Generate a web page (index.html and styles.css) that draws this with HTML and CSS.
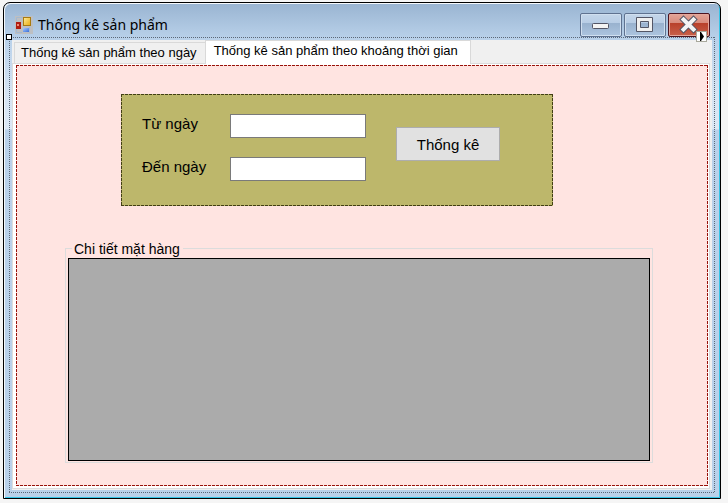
FILE: index.html
```html
<!DOCTYPE html>
<html lang="vi">
<head>
<meta charset="utf-8">
<title>Thống kê sản phẩm</title>
<link rel="stylesheet" href="styles.css">
</head>
<body>
<main class="window">
  <header class="titlebar">
    <svg class="app-icon" width="18" height="18" viewBox="0 0 18 18" aria-hidden="true">
      <defs>
        <linearGradient id="gold" x1="0" y1="0" x2="1" y2="1"><stop offset="0" stop-color="#ffec9a"/><stop offset="1" stop-color="#e8ab10"/></linearGradient>
        <linearGradient id="blue" x1="0" y1="0" x2="1" y2="1"><stop offset="0" stop-color="#a4c8ff"/><stop offset="1" stop-color="#3a6fd8"/></linearGradient>
      </defs>
      <rect width="18" height="18" fill="#bdbfc2"/>
      <path d="M1.500 5V1.500H8M1.500 13v3.500H7M14.500 11v5.500H14" fill="none" stroke="#a3b9d2"/>
      <rect x="8.500" y="1.500" width="7" height="8" fill="url(#gold)" stroke="#a87a10"/>
      <rect x="1" y="6" width="5" height="7" fill="#b01c10"/>
      <rect x="2" y="8" width="2" height="2" fill="#f08a78"/>
      <rect x="8" y="12" width="6" height="4" fill="url(#blue)"/>
    </svg>
    <h1 class="title">Thống kê sản phẩm</h1>
    <div class="caption-buttons">
      <button class="caption" type="button" aria-label="Minimize">
        <svg width="40" height="22" viewBox="0 0 40 22"><rect x="11.500" y="9.500" width="16" height="5" rx="1" fill="#f4f4f4" stroke="#535666"/></svg>
      </button>
      <button class="caption" type="button" aria-label="Maximize">
        <svg width="40" height="22" viewBox="0 0 40 22"><path fill-rule="evenodd" d="M11.500 3.500h16v14h-16zM15.500 7.500h8v6h-8z" fill="#f0f0f0" stroke="#535666"/></svg>
      </button>
      <button class="caption close" type="button" aria-label="Close">
        <svg width="40" height="22" viewBox="0 0 40 22" fill="none" stroke-linecap="square">
          <path d="M14.500 5.500L24.500 15.500M24.500 5.500L14.500 15.500" stroke="#535666" stroke-width="6"/>
          <path d="M14.500 5.500L24.500 15.500M24.500 5.500L14.500 15.500" stroke="#f4f4f4" stroke-width="4"/>
        </svg>
      </button>
    </div>
  </header>

  <div class="selection">
    <span class="handle"></span>
    <button class="smart-tag" type="button" aria-label="Tasks">
      <svg width="9" height="9" viewBox="0 0 9 9"><path d="M3 0h1l3 4.500L4 9H3z" fill="#000"/></svg>
    </button>
    <div class="client">
      <div class="tabs" role="tablist">
        <button class="tab" type="button" role="tab" aria-selected="false">Thống kê sản phẩm theo ngày</button>
        <button class="tab active" type="button" role="tab" aria-selected="true">Thống kê sản phẩm theo khoảng thời gian</button>
      </div>
      <section class="page" role="tabpanel">
        <div class="page-body dashed">
          <form class="filter dashed">
            <div class="fields">
              <label for="from">Từ ngày</label>
              <input id="from" type="text">
              <label for="to">Đến ngày</label>
              <input id="to" type="text">
            </div>
            <button class="submit" type="button">Thống kê</button>
          </form>
          <fieldset class="details">
            <legend>Chi tiết mặt hàng</legend>
            <div class="grid-view"></div>
          </fieldset>
        </div>
      </section>
    </div>
  </div>
</main>
</body>
</html>
```
FILE: styles.css
```css
* {
  box-sizing: border-box;
}

body {
  margin: 0;
  min-height: 100vh;
  padding: 2px 7px 4px 3px;
  display: flex;
  background: #f5f5f5;
  color: #000;
  font-family: "Liberation Sans", Arial, sans-serif;
  font-size: 13px;
}

button,
input {
  margin: 0;
  font: inherit;
  color: inherit;
}

.window {
  flex: 1;
  display: flex;
  flex-direction: column;
  padding: 0 5px 5px;
  border: 1px solid #000;
  border-radius: 7px 7px 0 0;
  background: linear-gradient(#99b4d1, #b9d1ea 36px, #d5e4f3 90px, #dce8f5 126px, #b9d1ea 127px);
  box-shadow: inset 1px 1px #f4f8fc, inset -1px -1px #35c4e6;
}

.titlebar {
  display: flex;
  align-items: flex-start;
  height: 34px;
  padding: 10px 5px 0 6px;
}

.app-icon {
  margin-top: 3px;
}

.title {
  flex: 1;
  margin: 2px 0 0 5px;
  font: 14px/20px "Noto Sans", "Segoe UI", sans-serif;
}

.caption-buttons {
  display: flex;
  gap: 2px;
}

.caption {
  width: 42px;
  height: 24px;
  padding: 0;
  border: 1px solid #5f7290;
  border-radius: 2px;
  background: linear-gradient(#c4d6ea, #b8cde5 9px, #98b1ce 9px, #adc5df);
  box-shadow: inset 0 0 0 1px #d0dfef;
}

.caption svg {
  display: block;
}

.close {
  border-color: #4b1420;
  background: linear-gradient(#e3a598, #d88b7c 9px, #b8402a 9px, #c8604a);
  box-shadow: inset 0 0 0 1px #e4a79b;
}

.selection {
  position: relative;
  flex: 1;
  display: flex;
  padding: 3px;
  background:
    repeating-linear-gradient(90deg, #5b6878 0 1px, transparent 1px 2px) top / 100% 1px no-repeat,
    repeating-linear-gradient(90deg, #5b6878 0 1px, transparent 1px 2px) bottom / 100% 1px no-repeat,
    repeating-linear-gradient(#5b6878 0 1px, transparent 1px 2px) left / 1px 100% no-repeat,
    repeating-linear-gradient(#5b6878 0 1px, transparent 1px 2px) right / 1px 100% no-repeat;
}

.handle {
  position: absolute;
  top: -3px;
  left: -3px;
  width: 6px;
  height: 6px;
  border: 1px solid #000;
  background: #fff;
}

.smart-tag {
  position: absolute;
  top: -6px;
  right: 8px;
  width: 11px;
  height: 11px;
  padding: 0;
  border: 1px solid #a8a89c;
  background: #fff;
}

.smart-tag svg {
  display: block;
}

.client {
  flex: 1;
  display: flex;
  flex-direction: column;
  padding: 0 2px 1px 0;
  background: #f0f0f0;
}

.tabs {
  display: flex;
  align-items: flex-end;
  height: 24px;
  padding-left: 2px;
}

.tab {
  height: 22px;
  padding: 0 8px 0 6px;
  border: 1px solid #d9d9d9;
  border-right: 0;
  background: #f0f0f0;
  line-height: 20px;
  white-space: nowrap;
}

.tab.active {
  z-index: 1;
  height: 24px;
  padding: 0 12px 3px 8px;
  border-right: 1px solid #d9d9d9;
  border-bottom: 0;
  background: #fff;
}

.page {
  flex: 1;
  display: flex;
  margin-top: -1px;
  padding: 1px 1px 2px 3px;
  border: 1px solid #dcdcdc;
  background: #fff;
}

.dashed {
  background-image:
    repeating-linear-gradient(90deg, var(--dash) 0 3px, transparent 3px 4px),
    repeating-linear-gradient(90deg, var(--dash) 0 3px, transparent 3px 4px),
    repeating-linear-gradient(var(--dash) 0 3px, transparent 3px 4px),
    repeating-linear-gradient(var(--dash) 0 3px, transparent 3px 4px);
  background-position: top, bottom, left, right;
  background-size: 100% 1px, 100% 1px, 1px 100%, 1px 100%;
  background-repeat: no-repeat;
}

.page-body {
  --dash: #98120a;
  flex: 1;
  display: flex;
  flex-direction: column;
  gap: 33px;
  padding: 29px 55px 23px 49px;
  background-color: #ffe4e1;
}

.filter {
  --dash: #423f14;
  display: flex;
  align-items: flex-start;
  gap: 30px;
  margin: 0 100px 0 56px;
  padding: 20px 20px 25px 21px;
  background-color: #bdb76b;
  font-size: 15px;
}

.fields {
  display: grid;
  grid-template-columns: 88px 136px;
  row-gap: 19px;
}

.fields label {
  line-height: 20px;
}

.fields input {
  width: 100%;
  height: 24px;
  padding: 2px 4px;
  border: 1px solid #7a7a7a;
  background: #fff;
}

.submit {
  width: 104px;
  height: 34px;
  margin-top: 13px;
  padding: 0;
  border: 1px solid #adadad;
  background: #e1e1e1;
}

.details {
  flex: 1;
  display: flex;
  min-width: 0;
  margin: 0;
  padding: 1px 2px;
  border: 1px solid #dcdcdc;
}

.details legend {
  margin-left: 4px;
  padding: 3px 3px 0 2px;
  font-size: 14px;
  line-height: 15px;
}

.grid-view {
  flex: 1;
  border: 1px solid #000;
  background: #ababab;
}
```
